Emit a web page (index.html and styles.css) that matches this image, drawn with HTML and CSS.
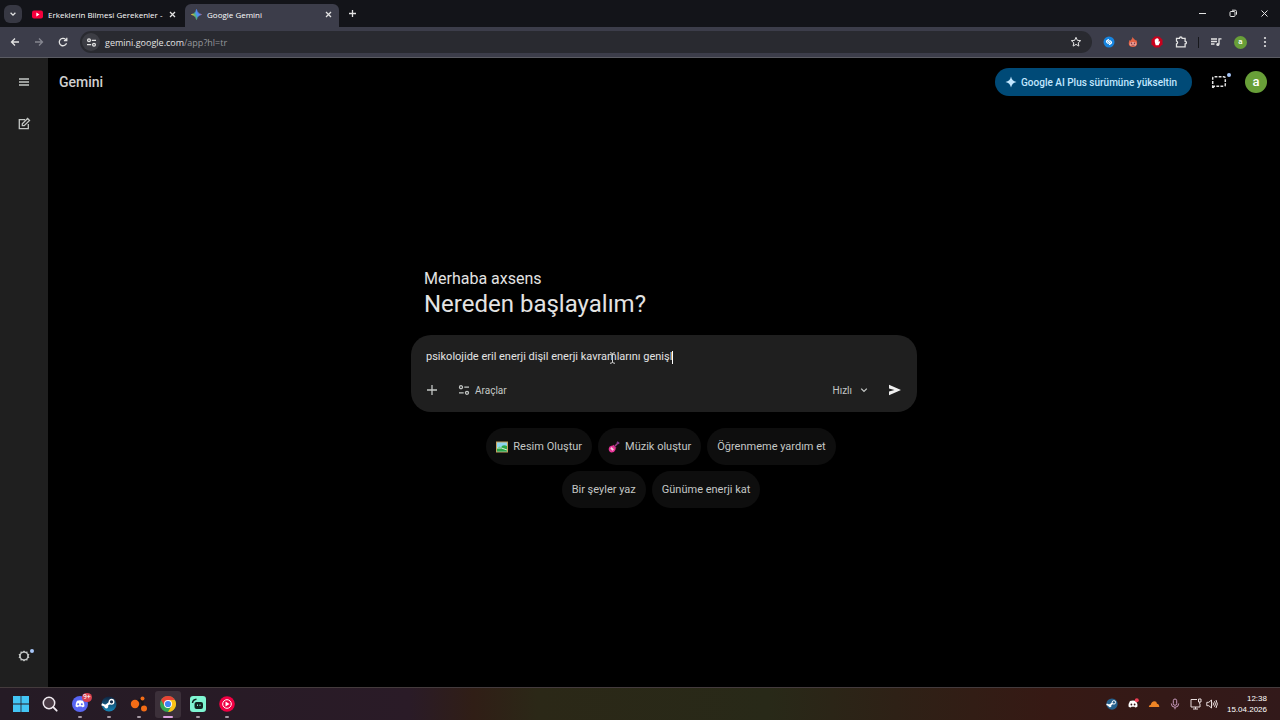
FILE: index.html
```html
<!DOCTYPE html>
<html lang="tr">
<head>
<meta charset="utf-8">
<title>Google Gemini</title>
<link rel="stylesheet" href="styles.css">
</head>
<body>
<div class="screen">
  <header class="tabstrip">
    <button class="tab-search" aria-label="Sekmelerde ara"><svg width="8" height="8" viewBox="0 0 8 8"><path d="M1.6 2.8 4 5.2l2.4-2.4" class="line"/></svg></button>
    <div class="tab">
      <svg width="11" height="11" viewBox="0 0 11 11"><rect x="0" y="1.5" width="11" height="8" rx="2" fill="#f5003c"/><path d="M4.3 3.6v3.8L7.5 5.5z" fill="#fff"/></svg>
      <span class="tab-title">Erkeklerin Bilmesi Gerekenler -</span>
      <button class="icon-btn" aria-label="Sekmeyi kapat"><svg width="9" height="9" viewBox="0 0 9 9"><path d="m2 2 5 5m0-5-5 5" class="line"/></svg></button>
    </div>
    <div class="tab active">
      <svg width="11" height="11" viewBox="0 0 24 24"><defs><linearGradient id="spark" x1="0" y1=".7" x2="1" y2=".3"><stop offset=".1" stop-color="#f7c93a"/><stop offset=".35" stop-color="#4fb882"/><stop offset=".55" stop-color="#4c8df6"/><stop offset=".8" stop-color="#5a8cf0"/><stop offset="1" stop-color="#e85a5a"/></linearGradient></defs><path d="M12 1c1.500 6.500 4.500 9.500 11 11-6.500 1.500-9.500 4.500-11 11-1.500-6.500-4.500-9.500-11-11 6.500-1.500 9.500-4.500 11-11z" fill="url(#spark)" stroke="url(#spark)" stroke-width="1.500"/></svg>
      <span class="tab-title">Google Gemini</span>
      <button class="icon-btn" aria-label="Sekmeyi kapat"><svg width="9" height="9" viewBox="0 0 9 9"><path d="m2 2 5 5m0-5-5 5" class="line"/></svg></button>
    </div>
    <button class="icon-btn new-tab" aria-label="Yeni sekme"><svg width="9" height="9" viewBox="0 0 9 9"><path d="M4.500 1v7M1 4.500h7" class="line"/></svg></button>
    <div class="window-controls">
      <button class="icon-btn" aria-label="Simge durumuna küçült"><svg width="9" height="9" viewBox="0 0 9 9"><path d="M1 4.500h7" class="thin"/></svg></button>
      <button class="icon-btn" aria-label="Geri yükle"><svg width="9" height="9" viewBox="0 0 9 9"><rect x="1" y="2.500" width="5" height="5" rx="1" class="thin"/><path d="M3 1.200h3.200q1.300 0 1.300 1.300v3.200" class="thin"/></svg></button>
      <button class="icon-btn" aria-label="Kapat"><svg width="9" height="9" viewBox="0 0 9 9"><path d="m1.500 1.500 6 6m0-6-6 6" class="thin"/></svg></button>
    </div>
  </header>

  <nav class="toolbar">
    <div class="nav-buttons">
      <button class="icon-btn" aria-label="Geri"><svg width="12" height="12" viewBox="0 0 12 12"><path d="M10 6H2.500M6 2.500 2.500 6 6 9.500" class="line"/></svg></button>
      <button class="icon-btn muted" aria-label="İleri"><svg width="12" height="12" viewBox="0 0 12 12"><path d="M2 6h7.500M6 2.500 9.500 6 6 9.500" class="line"/></svg></button>
      <button class="icon-btn" aria-label="Yenile"><svg width="12" height="12" viewBox="0 0 12 12"><path d="M9.500 7.200a3.700 3.700 0 1 1-.9-3.800L9.700 4.500M9.800 1.800v2.900H6.900" class="line"/></svg></button>
    </div>
    <div class="omnibox">
      <span class="site-info"><svg width="11" height="11" viewBox="0 0 11 11"><circle cx="3" cy="3.300" r="1.400" class="line"/><circle cx="8" cy="7.700" r="1.400" class="line"/><path d="M5.800 3.300H10M1 7.700h4.200" class="line"/></svg></span>
      <span class="url">gemini.google.com<span class="url-path">/app?hl=tr</span></span>
      <button class="icon-btn" aria-label="Yer işareti ekle"><svg width="12" height="12" viewBox="0 0 12 12"><path d="m6 1.300 1.350 3.050 3.350.3-2.500 2.200.7 3.250L6 8.400 3.100 10.100l.7-3.250-2.500-2.200 3.350-.3z" class="thin"/></svg></button>
    </div>
    <div class="extensions">
      <button class="icon-btn" aria-label="Shazam"><svg width="12" height="12" viewBox="0 0 12 12"><circle cx="6" cy="6" r="5.500" fill="#1785e0"/><path d="M5.300 7.500 3.900 6.400Q3 5.600 3.900 4.700L5.500 3.500M6.700 4.500l1.400 1.100q.9.800 0 1.700L6.500 8.500M5 5l2 2" fill="none" stroke="#fff" stroke-width="1.100" stroke-linecap="round"/></svg></button>
      <button class="icon-btn" aria-label="Alev eklentisi"><svg width="12" height="12" viewBox="0 0 12 12"><path d="M5.700.8C6 3 7.800 2.800 8.200 4.500L9 3.800C10.800 6 11 11 6 11S1.200 6.500 2.700 4l1 .8C4 3.500 5.500 3 5.700.8z" fill="#e66345"/><rect x="2.700" y="6" width="6.600" height="4" rx="1.700" fill="#f1a296"/><circle cx="4.500" cy="7.200" r=".8" fill="#762d3f"/><circle cx="7.500" cy="7.200" r=".8" fill="#762d3f"/><path d="M4.300 9q1.700.8 3.400 0" fill="none" stroke="#762d3f" stroke-width=".7"/></svg></button>
      <button class="icon-btn" aria-label="Reklam engelleyici"><svg width="12" height="12" viewBox="0 0 12 12"><path d="M3.700.5h4.600l3.200 3.200v4.600l-3.200 3.200H3.700L.5 8.300V3.700z" fill="#c9001c"/><path d="M3.800 6V3.500q.6-.6.900 0V2.800q.6-.7 1 0v-.5q.6-.6 1 0V3q.7-.7 1 0v3l.7-.8q.9-.1.700.7L7.600 9.200H4.700z" fill="#fff"/></svg></button>
      <button class="icon-btn" aria-label="Uzantılar"><svg width="12" height="12" viewBox="0 0 12 12"><path d="M1.500 2.300h3a1.300 1.300 0 0 1 2.600 0h3v3a1.300 1.300 0 0 1 0 2.600v2.900H1.500V8a1.500 1.500 0 0 0 0-2.900z" class="line"/></svg></button>
      <span class="divider"></span>
      <button class="icon-btn" aria-label="Medya"><svg width="12" height="12" viewBox="0 0 12 12"><path d="M1 3h6M1 5.500h6M1 8h3.500M9 8V2.800h2.500" class="line"/><circle cx="7.900" cy="8.500" r="1.600" fill="currentColor"/></svg></button>
      <button class="avatar small" aria-label="Profil">a</button>
      <button class="icon-btn" aria-label="Menü"><svg width="12" height="12" viewBox="0 0 12 12" fill="currentColor"><circle cx="6" cy="2" r="1.100"/><circle cx="6" cy="6" r="1.100"/><circle cx="6" cy="10" r="1.100"/></svg></button>
    </div>
  </nav>

  <div class="app">
    <aside class="sidebar">
      <button class="icon-btn" aria-label="Ana menü"><svg width="12" height="12" viewBox="0 0 12 12"><path d="M1 3h10M1 6h10M1 9h10" class="line"/></svg></button>
      <button class="icon-btn" aria-label="Yeni sohbet"><svg width="14" height="14" viewBox="0 0 14 14"><path d="M8 2.700H2.300v9h9V7M5.300 8.700V6.800l5.300-5.300 1.900 1.900-5.300 5.300z" class="line"/></svg></button>
      <button class="icon-btn settings" aria-label="Ayarlar"><svg width="12" height="12" viewBox="0 0 14 14"><path d="m7 .5 1.700 1.500 2.300-.2.300 2.200 2 1.100-.8 1.900.8 1.900-2 1.100-.3 2.200-2.300-.2L7 13.500 5.300 12l-2.300.2-.3-2.200-2-1.100.8-1.900-.8-1.900 2-1.100L3 1.800l2.300.2z" fill="currentColor"/><circle cx="7" cy="7" r="3.700" fill="#1f1f1f"/></svg><span class="dot"></span></button>
    </aside>

    <main class="content">
      <div class="app-bar">
        <span class="brand">Gemini</span>
        <button class="upgrade"><svg width="12" height="12" viewBox="0 0 24 24"><path d="M12 1c1.500 6.500 4.500 9.500 11 11-6.500 1.500-9.500 4.500-11 11-1.500-6.500-4.500-9.500-11-11 6.500-1.500 9.500-4.500 11-11z" fill="#c2e7ff"/></svg>Google AI Plus sürümüne yükseltin</button>
        <button class="icon-btn temp-chat" aria-label="Geçici sohbet"><svg width="16" height="16" viewBox="0 0 16 16"><path d="M1.700 14V4.200q0-1.500 1.500-1.500h9.600q1.500 0 1.500 1.500v6.500q0 1.500-1.500 1.500H3.200z" fill="none" stroke="currentColor" stroke-width="1.500" stroke-dasharray="2.800 1.300"/></svg><span class="dot"></span></button>
        <button class="avatar" aria-label="Google Hesabı">a</button>
      </div>

      <section class="hero">
        <div class="greeting">
          <p class="hello">Merhaba axsens</p>
          <h1 class="question">Nereden başlayalım?</h1>
        </div>
        <form class="prompt">
          <div class="prompt-line"><input class="prompt-input" type="text" aria-label="İstem girin" value="psikolojide eril enerji dişil enerji kavramlarını genişl"><span class="caret"></span>
            <svg class="pointer" width="7" height="12" viewBox="0 0 7 12"><path d="M1 .7q2.500 0 2.500 1.500V10q0 1.300-2.500 1.300M6 .7q-2.500 0-2.500 1.500V10q0 1.300 2.500 1.300" fill="none" stroke="#d0d0d0"/></svg>
          </div>
          <div class="prompt-tools">
            <button type="button" class="icon-btn" aria-label="Dosya ekle"><svg width="12" height="12" viewBox="0 0 12 12"><path d="M6 1v10M1 6h10" class="line"/></svg></button>
            <button type="button" class="text-btn"><svg width="12" height="12" viewBox="0 0 12 12"><circle cx="3" cy="3.200" r="1.500" class="line"/><circle cx="9" cy="8.800" r="1.500" class="line"/><path d="M6.300 3.200h4.700M1 8.800h4.700" class="line"/></svg>Araçlar</button>
            <button type="button" class="text-btn mode">Hızlı<svg width="8" height="8" viewBox="0 0 8 8"><path d="m1.200 2.600 2.800 2.800 2.800-2.800" class="line"/></svg></button>
            <button type="submit" class="icon-btn" aria-label="Gönder"><svg width="14" height="14" viewBox="0 0 14 14"><path d="m1 1.800 12 5.200L1 12.200V8.500L6.500 7 1 5.500z" fill="#f0f0f0"/></svg></button>
          </div>
        </form>
        <div class="chips">
          <button class="chip"><svg width="12" height="12" viewBox="0 0 12 12"><rect x=".5" y="1" width="11" height="10" fill="#8fd4ee" stroke="#c8a45d"/><path d="M1 7.500q2-3 4-1 1.500-3.500 6-1.500v5.500H1z" fill="#2ba84a"/><path d="M1 7q4-1 10 2" fill="none" stroke="#d8f0d8"/></svg>Resim Oluştur</button>
          <button class="chip"><svg width="12" height="12" viewBox="0 0 12 12"><path d="m5 7 5.500-5.500" stroke="#a03c86" stroke-width="1.500"/><path d="m9.500.3 2.300 1.700-1.300 1.200-2-1.700z" fill="#7b3a8c"/><path d="M3.300 4.700q1.800.2 2-1 .9-.1.600 1.700l.8.800q1.900-.3 1.600.7-1.200.3-.8 1.800-1 3-4.300 2.700Q.5 10.500.7 7.700 1 5 3.300 4.700z" fill="#e63597"/><path d="m3.500 6 2.500 2.500-1.500 1.300L2.300 7.600z" fill="#f5ccdd"/></svg>Müzik oluştur</button>
          <button class="chip">Öğrenmeme yardım et</button>
          <button class="chip">Bir şeyler yaz</button>
          <button class="chip">Günüme enerji kat</button>
        </div>
      </section>
    </main>
  </div>

  <footer class="taskbar">
    <div class="task-icons">
      <button class="task" aria-label="Başlat"><svg width="16" height="16" viewBox="0 0 16 16" fill="#43c5f5"><path d="M0 0h7.600v7.600H0zM8.400 0H16v7.600H8.400zM0 8.400h7.600V16H0zM8.400 8.400H16V16H8.400z"/></svg></button>
      <button class="task" aria-label="Ara"><svg width="16" height="16" viewBox="0 0 16 16"><circle cx="7" cy="7" r="5.700" fill="#4a3b45" stroke="#f0eaf0" stroke-width="1.500"/><path d="m11.200 11.200 3.500 3.500" stroke="#f0eaf0" stroke-width="1.800" stroke-linecap="round"/></svg></button>
      <button class="task open" aria-label="Discord"><svg width="16" height="16" viewBox="0 0 16 16"><circle cx="8" cy="8" r="8" fill="#5865f2"/><path d="M5 4.700q3-.8 6 0 1.700 2.500 1.500 5.500-1 .9-2.300 1.100l-.6-.9H6.400l-.6.900q-1.300-.2-2.300-1.100-.2-3 1.500-5.500z" fill="#fff"/><circle cx="6.200" cy="8.300" r="1" fill="#5865f2"/><circle cx="9.800" cy="8.300" r="1" fill="#5865f2"/></svg><span class="badge">9+</span></button>
      <button class="task open" aria-label="Steam"><svg width="16" height="16" viewBox="0 0 16 16"><defs><linearGradient id="steam" x1="0" y1="0" x2="0" y2="1"><stop offset="0" stop-color="#10233f"/><stop offset="1" stop-color="#1687b9"/></linearGradient></defs><circle cx="8" cy="8" r="7.500" fill="url(#steam)"/><path d="m.7 8.300 4 1.700 5.300-4" fill="none" stroke="#fff" stroke-width="2.200"/><circle cx="10.500" cy="5.800" r="2.300" fill="#17304e" stroke="#fff" stroke-width="1.300"/><circle cx="5.300" cy="10.500" r="1.900" fill="#fff"/></svg></button>
      <button class="task open" aria-label="Uygulama"><svg width="18" height="18" viewBox="0 0 18 18" fill="#f36c16"><path d="m5 9 7-5.500M5 9l8 4.500M12 3.500l1 10" stroke="#17151a" stroke-width="2.500"/><circle cx="5" cy="9" r="4.200"/><circle cx="12.500" cy="3.500" r="2"/><circle cx="14" cy="13.500" r="3"/></svg></button>
      <button class="task open current" aria-label="Chrome"><svg width="16" height="16" viewBox="0 0 16 16"><circle cx="8" cy="8" r="8" fill="#34a853"/><path d="m11.460 10-3.460 6A8 8 0 0 0 14.930 4H8z" fill="#fbc116"/><path d="M1.070 4a8 8 0 0 1 13.860 0H8L4.540 10z" fill="#e84335"/><circle cx="8" cy="8" r="4" fill="#fff"/><circle cx="8" cy="8" r="3.100" fill="#4285f4"/></svg></button>
      <button class="task open" aria-label="Streamlabs"><svg width="16" height="16" viewBox="0 0 16 16"><rect width="16" height="16" rx="3" fill="#7ff5d2"/><rect x="4.500" y="6" width="8.500" height="7" rx="2" fill="#10231f"/><path d="M7.500 8.500V10M10 8.500V10" stroke="#7ff5d2"/><path d="M2.500 7q.3-3.500 4-3.800" fill="none" stroke="#10231f" stroke-width="1.500"/></svg></button>
      <button class="task open" aria-label="YouTube Music"><svg width="16" height="16" viewBox="0 0 16 16"><circle cx="8" cy="8" r="7.800" fill="#f00043"/><circle cx="8" cy="8" r="4.300" fill="none" stroke="#fff"/><path d="M6.500 5.500v5L10.500 8z" fill="#fff"/></svg></button>
    </div>
    <div class="tray">
      <svg width="12" height="12" viewBox="0 0 16 16"><circle cx="8" cy="8" r="7.500" fill="#26608c"/><path d="m.7 8.300 4 1.700 5.300-4" fill="none" stroke="#fff" stroke-width="2.200"/><circle cx="10.500" cy="5.800" r="2.300" fill="#235d88" stroke="#fff" stroke-width="1.300"/><circle cx="5.300" cy="10.500" r="1.900" fill="#fff"/></svg>
      <svg width="12" height="12" viewBox="0 0 12 12"><path d="M3 3q3-.8 6 0 1.700 2.500 1.500 5.500-1 .9-2.300 1.100L7.500 8.700h-3l-.7.900Q2.500 9.400 1.500 8.500 1.300 5.500 3 3z" fill="#fff"/><circle cx="4.400" cy="6.500" r=".9" fill="#35181b"/><circle cx="7.600" cy="6.500" r=".9" fill="#35181b"/><circle cx="9.800" cy="2.300" r="2" fill="#ef3d55"/></svg>
      <svg width="12" height="12" viewBox="0 0 12 12"><path d="M.8 9q0-2 2-2.200Q3.500 3.300 6.500 3.300q2.200 0 2.500 2.400 2.300.2 2.300 3.300z" fill="#ee8425"/></svg>
      <svg width="12" height="12" viewBox="0 0 12 12" fill="none" stroke="#c99bbd"><rect x="4.300" y="1" width="3.400" height="6.300" rx="1.700"/><path d="M2.300 5.500q0 3.800 3.700 3.800t3.700-3.800M6 9.300v2"/></svg>
      <div class="tray-group">
        <svg width="12" height="12" viewBox="0 0 12 12" fill="none" stroke="#e9dddd"><path d="M7 1.500H1v7.500h9V6M3 11h5M5.500 9v2M8.500 1v3h2.500V1zM9.700 4v2"/></svg>
        <svg width="12" height="12" viewBox="0 0 12 12" fill="none" stroke="#e9dddd"><path d="M.8 4.300h2L5.500 2v8L2.800 7.700h-2zM7 4.500q1 1.500 0 3M8.500 3.200q1.900 2.800 0 5.600M10 2q2.700 4 0 8"/></svg>
      </div>
      <div class="clock"><span>12:38</span><span>15.04.2026</span></div>
    </div>
  </footer>
</div>
</body>
</html>
```
FILE: styles.css
```css
* { box-sizing: border-box; }
body { margin: 0; background: #000; color: #e3e3e3; font-family: Roboto, "Noto Sans", sans-serif; }
button { border: 0; background: none; padding: 0; color: inherit; font: inherit; }
svg { display: block; flex: none; }
p, h1 { margin: 0; font-weight: 400; }
.line, .thin { fill: none; stroke: currentColor; stroke-width: 1.3; }
.thin { stroke-width: 1; }
.screen { display: flex; flex-direction: column; height: 100vh; }
.icon-btn { display: flex; align-items: center; justify-content: center; position: relative; flex: none; }
.dot { position: absolute; width: 4px; height: 4px; border-radius: 50%; background: #a8c7fa; top: -1px; right: -4px; }

.tabstrip { display: flex; align-items: flex-end; height: 27px; background: #131419; font: 8px "Open Sans", sans-serif; flex: none; }
.tab-search { width: 18px; height: 18px; margin: 0 4px 4px; border-radius: 6px; background: #373843; display: flex; align-items: center; justify-content: center; }
.tab { display: flex; align-items: center; gap: 5px; width: 154px; height: 23px; padding: 0 6px 3px; border-radius: 6px 6px 0 0; }
.tab.active { background: #3c3d4a; margin-left: 5px; }
.tab-title { flex: 1; white-space: nowrap; color: #fff; }
.new-tab { margin: 0 9px 9px; }
.window-controls { display: flex; gap: 22px; margin: 0 11px 9px auto; }

.toolbar { display: flex; align-items: center; height: 31px; background: #3c3d4a; border-bottom: 1px solid #5b5c63; flex: none; }
.nav-buttons { display: flex; gap: 12px; padding: 0 11px 0 9px; }
.muted { color: #858690; }
.omnibox { display: flex; align-items: center; gap: 5px; flex: 1; height: 22px; padding: 0 10px 0 2px; border-radius: 11px; background: #292a30; font: 9px "Open Sans", sans-serif; }
.site-info { display: grid; place-items: center; width: 18px; height: 18px; border-radius: 50%; background: #3c3d44; }
.url { flex: 1; }
.url-path { color: #96979c; }
.extensions { display: flex; align-items: center; gap: 12px; padding: 0 9px 0 11px; }
.extensions .divider { margin: 0 -1px; }
.divider { width: 1px; height: 11px; background: #17181c; }
.avatar { width: 22px; height: 22px; border-radius: 50%; background: #689f38; color: #fff; font: 500 13px/20px Roboto, sans-serif; text-align: center; }
.avatar.small { width: 13px; height: 13px; font-size: 8px; line-height: 12px; }

.app { display: flex; flex: 1; min-height: 0; }
.sidebar { display: flex; flex-direction: column; align-items: center; gap: 29px; width: 48px; padding: 18px 0 25px; background: #1f1f1f; color: #c4c7c5; }
.settings { margin-top: auto; }
.content { flex: 1; display: flex; flex-direction: column; }
.app-bar { display: flex; align-items: center; padding: 10px 13px 0 11px; }
.brand { flex: 1; font: 500 14px/20px Roboto, sans-serif; color: #cfcfcf; }
.upgrade { display: flex; align-items: center; gap: 4px; height: 28px; padding: 0 15px 0 10px; border-radius: 14px; background: #004a77; color: #c2e7ff; font: 500 10px Roboto, sans-serif; }
.temp-chat { margin: 0 18px 0 19px; }

.hero { width: 506px; max-width: 100%; margin: 172px auto 0; }
.greeting { padding: 0 13px; }
.hello { font-size: 16px; line-height: 22px; }
.question { font-size: 24px; line-height: 29px; }
.prompt { margin-top: 16px; padding: 14px 15px; border-radius: 20px; background: #1f1f1f; }
.prompt-line { display: flex; align-items: center; position: relative; height: 16px; }
.prompt-input { field-sizing: content; border: 0; padding: 0; outline: 0; background: none; color: #e3e3e3; font: 11px/16px Roboto, sans-serif; }
.caret { width: 1px; height: 13px; background: #fff; }
.pointer { position: absolute; left: 183px; top: 3px; }
.prompt-tools { display: flex; align-items: center; height: 16px; margin-top: 17px; color: #c4c7c5; }
.text-btn { display: flex; align-items: center; gap: 5px; margin-left: 20px; font-size: 10px; }
.mode { margin: 0 20px 0 auto; gap: 8px; }
.chips { display: flex; flex-wrap: wrap; justify-content: center; gap: 6px; padding: 16px 60px 0 54px; }
.chip { display: flex; align-items: center; gap: 5px; height: 37px; padding: 0 10px; border-radius: 19px; background: #0e0e0e; color: #c4c7c5; font-size: 11px; }

.taskbar { display: flex; align-items: center; justify-content: space-between; height: 33px; flex: none; border-top: 1px solid #443b3d; background: linear-gradient(90deg, #251b25 0, #2a1b27 32%, #301e16 37%, #2b2817 42%, #282918 60%, #2e2116 70%, #361914 82%, #32191a 100%); }
.task-icons { display: flex; justify-content: space-between; width: 232px; margin-left: 8px; }
.task { position: relative; display: grid; place-items: center; width: 26px; height: 27px; border-radius: 3px; }
.task.open::after { content: ""; position: absolute; bottom: 0; left: 11px; width: 4px; height: 2px; border-radius: 1px; background: #a69aa4; }
.task.current { background: #3c303a; }
.task.current::after { left: 8px; width: 10px; background: #dda3df; }
.badge { position: absolute; top: 2px; right: 1px; width: 10px; height: 9px; border-radius: 5px; background: #d84150; color: #fff; font: 7px/9px Roboto, sans-serif; text-align: center; }
.tray { display: flex; align-items: center; gap: 9px; padding-right: 13px; }
.tray-group { display: flex; gap: 4px; }
.clock { display: flex; flex-direction: column; text-align: right; font: 8px/11px "Liberation Sans", sans-serif; color: #fff; }
```
